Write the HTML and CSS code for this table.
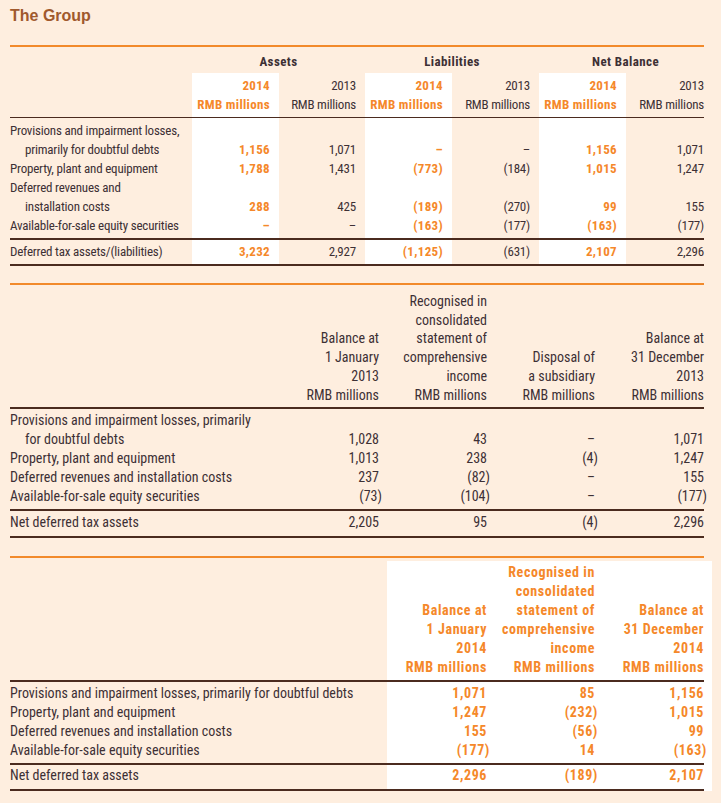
FILE: index.html
```html
<!DOCTYPE html>
<html lang="en">
<head>
<meta charset="utf-8">
<title>The Group</title>
<link rel="stylesheet" href="styles.css">
</head>
<body>
<div class="page">
  <h1 class="title">The Group</h1>

  <section class="block">
    <table class="t1">
      <colgroup>
        <col class="c-lbl1"><col class="c-a"><col class="c-b"><col class="c-a"><col class="c-a"><col class="c-a"><col class="c-last1">
      </colgroup>
      <thead>
        <tr class="grp">
          <th></th>
          <th colspan="2">Assets</th>
          <th colspan="2">Liabilities</th>
          <th colspan="2" class="nb">Net Balance</th>
        </tr>
        <tr class="sub">
          <th></th>
          <th class="cur">2014<br>RMB millions</th>
          <th>2013<br>RMB millions</th>
          <th class="cur">2014<br>RMB millions</th>
          <th>2013<br>RMB millions</th>
          <th class="cur">2014<br>RMB millions</th>
          <th>2013<br>RMB millions</th>
        </tr>
      </thead>
      <tbody>
        <tr class="first">
          <td class="lbl">Provisions and impairment losses,<span class="ind">primarily for doubtful debts</span></td>
          <td class="cur">1,156</td><td>1,071</td>
          <td class="cur">–</td><td>–</td>
          <td class="cur">1,156</td><td>1,071</td>
        </tr>
        <tr>
          <td class="lbl">Property, plant and equipment</td>
          <td class="cur">1,788</td><td>1,431</td>
          <td class="cur">(773)</td><td>(184)</td>
          <td class="cur">1,015</td><td>1,247</td>
        </tr>
        <tr>
          <td class="lbl">Deferred revenues and<span class="ind">installation costs</span></td>
          <td class="cur">288</td><td>425</td>
          <td class="cur">(189)</td><td>(270)</td>
          <td class="cur">99</td><td>155</td>
        </tr>
        <tr class="last">
          <td class="lbl">Available-for-sale equity securities</td>
          <td class="cur">–</td><td>–</td>
          <td class="cur">(163)</td><td>(177)</td>
          <td class="cur">(163)</td><td>(177)</td>
        </tr>
      </tbody>
      <tfoot>
        <tr class="total">
          <td class="lbl">Deferred tax assets/(liabilities)</td>
          <td class="cur">3,232</td><td>2,927</td>
          <td class="cur">(1,125)</td><td>(631)</td>
          <td class="cur">2,107</td><td>2,296</td>
        </tr>
      </tfoot>
    </table>
  </section>

  <section class="block">
    <table class="t2">
      <colgroup>
        <col class="c-lbl2"><col class="c-m"><col class="c-m"><col class="c-m"><col class="c-last2">
      </colgroup>
      <thead>
        <tr class="hd">
          <th></th>
          <th>Balance at<br>1 January<br>2013<br>RMB millions</th>
          <th>Recognised in<br>consolidated<br>statement of<br>comprehensive<br>income<br>RMB millions</th>
          <th>Disposal of<br>a subsidiary<br>RMB millions</th>
          <th>Balance at<br>31 December<br>2013<br>RMB millions</th>
        </tr>
      </thead>
      <tbody>
        <tr class="first">
          <td class="lbl">Provisions and impairment losses, primarily<span class="ind">for doubtful debts</span></td>
          <td>1,028</td><td>43</td><td>–</td><td>1,071</td>
        </tr>
        <tr>
          <td class="lbl">Property, plant and equipment</td>
          <td>1,013</td><td>238</td><td><span class="n">(4)</span></td><td>1,247</td>
        </tr>
        <tr>
          <td class="lbl">Deferred revenues and installation costs</td>
          <td>237</td><td><span class="n">(82)</span></td><td>–</td><td>155</td>
        </tr>
        <tr class="last">
          <td class="lbl">Available-for-sale equity securities</td>
          <td><span class="n">(73)</span></td><td><span class="n">(104)</span></td><td>–</td><td><span class="n">(177)</span></td>
        </tr>
      </tbody>
      <tfoot>
        <tr class="total">
          <td class="lbl">Net deferred tax assets</td>
          <td>2,205</td><td>95</td><td><span class="n">(4)</span></td><td>2,296</td>
        </tr>
      </tfoot>
    </table>
  </section>

  <section class="block gap">
    <table class="t3">
      <colgroup>
        <col class="c-lbl3"><col class="c-f"><col class="c-m"><col class="c-last2">
      </colgroup>
      <thead>
        <tr class="hd">
          <th></th>
          <th class="cur">Balance at<br>1 January<br>2014<br>RMB millions</th>
          <th class="cur">Recognised in<br>consolidated<br>statement of<br>comprehensive<br>income<br>RMB millions</th>
          <th class="cur">Balance at<br>31 December<br>2014<br>RMB millions</th>
        </tr>
      </thead>
      <tbody>
        <tr class="first">
          <td class="lbl">Provisions and impairment losses, primarily for doubtful debts</td>
          <td class="cur">1,071</td><td class="cur">85</td><td class="cur">1,156</td>
        </tr>
        <tr>
          <td class="lbl">Property, plant and equipment</td>
          <td class="cur">1,247</td><td class="cur"><span class="n">(232)</span></td><td class="cur">1,015</td>
        </tr>
        <tr>
          <td class="lbl">Deferred revenues and installation costs</td>
          <td class="cur">155</td><td class="cur"><span class="n">(56)</span></td><td class="cur">99</td>
        </tr>
        <tr class="last">
          <td class="lbl">Available-for-sale equity securities</td>
          <td class="cur"><span class="n">(177)</span></td><td class="cur">14</td><td class="cur"><span class="n">(163)</span></td>
        </tr>
      </tbody>
      <tfoot>
        <tr class="total">
          <td class="lbl">Net deferred tax assets</td>
          <td class="cur">2,296</td><td class="cur"><span class="n">(189)</span></td><td class="cur">2,107</td>
        </tr>
      </tfoot>
    </table>
  </section>
</div>
</body>
</html>
```

FILE: styles.css
```css
html, body {
  margin: 0;
  background: #feeedf;
}

body {
  font-family: "Roboto Condensed", "Roboto", sans-serif;
  font-stretch: condensed;
  font-size: 14px;
  color: #3d3035;
}

.page {
  padding: 6px 17px 12px 10px;
}

.title {
  margin: 0 0 19px;
  font-family: "Liberation Sans", Arial, sans-serif;
  font-stretch: normal;
  font-weight: bold;
  font-size: 16px;
  line-height: 20px;
  color: #a0592d;
}

.block {
  border-top: 2px solid #f28a2b;
}

.block + .block {
  margin-top: 17px;
}

.block.gap {
  margin-top: 18px;
  padding-top: 3px;
}

table {
  width: 694px;
  border-collapse: separate;
  border-spacing: 0;
  table-layout: fixed;
}

th, td {
  padding: 0;
  line-height: 19px;
  text-align: right;
  vertical-align: bottom;
  font-weight: normal;
  white-space: nowrap;
}

.lbl {
  text-align: left;
}

.ind {
  display: block;
  padding-left: 15px;
}

.cur {
  color: #f5882a;
  font-weight: bold;
  letter-spacing: 0.6px;
}

.n {
  margin-right: -3px;
}

/* ---------- table 1 ---------- */
.t1 {
  font-size: 13px;
  letter-spacing: -0.2px;
}

.c-lbl1 { width: 182px; }
.c-a { width: 87px; }
.c-b { width: 86px; }
.c-last1 { width: 78px; }

.t1 th, .t1 td {
  padding-right: 9px;
}

.t1 th:last-child, .t1 td:last-child {
  padding-right: 0;
}

.t1 .lbl {
  padding-right: 0;
}

.t1 .cur {
  background: #ffffff;
  letter-spacing: 0.33px;
}

.t1 .grp th {
  padding: 5px 0 2px;
  text-align: center;
  font-weight: bold;
  letter-spacing: 0.4px;
}

.t1 .grp th.nb {
  padding-left: 8px;
}

.t1 .sub th {
  padding-top: 3px;
  padding-bottom: 3px;
  border-bottom: 1px solid #4b2b1f;
}

.t1 .first td { padding-top: 3px; }
.t1 .last td { padding-bottom: 3px; border-bottom: 2px solid #4b2b1f; }
.t1 .total td { padding-top: 2px; padding-bottom: 3px; border-bottom: 2px solid #4b2b1f; }

/* ---------- table 2 ---------- */
.c-lbl2 { width: 261px; }
.c-m { width: 108px; }
.c-last2 { width: 109px; }

.t2 .hd th {
  padding-top: 7px;
  padding-bottom: 3px;
  line-height: 18.7px;
  border-bottom: 2px solid #4b2b1f;
}

.t2 .first td { padding-top: 2px; }
.t2 .last td { padding-bottom: 3px; border-bottom: 2px solid #4b2b1f; }
.t2 .total td { padding-top: 2px; padding-bottom: 4px; border-bottom: 2px solid #4b2b1f; }

/* ---------- table 3 ---------- */
.c-lbl3 { width: 377px; }
.c-f { width: 100px; }

.t3 th.cur, .t3 td.cur {
  background: #ffffff;
}

.t3 th:last-child, .t3 td:last-child {
  box-shadow: 8px 0 0 #ffffff;
}

.t3 .hd th {
  padding-top: 2px;
  padding-bottom: 3px;
  border-bottom: 2px solid #4b2b1f;
}

.t3 .first td { padding-top: 2px; }
.t3 .last td { padding-bottom: 3px; border-bottom: 2px solid #4b2b1f; }
.t3 .total td { padding-top: 1px; padding-bottom: 4px; border-bottom: 2px solid #4b2b1f; }
```
